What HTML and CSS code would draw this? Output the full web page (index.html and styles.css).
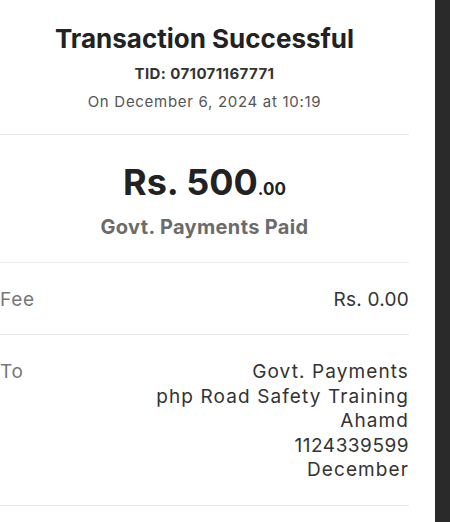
FILE: index.html
```html
<!DOCTYPE html>
<html lang="en">
<head>
<meta charset="utf-8">
<title>Transaction Successful</title>
<link rel="stylesheet" href="styles.css">
</head>
<body>
<div class="page">
  <main class="receipt">
    <header class="head">
      <h1 class="title">Transaction Successful</h1>
      <p class="tid">TID: 071071167771</p>
      <p class="date">On December 6, 2024 at 10:19</p>
    </header>
    <section class="amount-block">
      <div class="amount">Rs. 500<span class="cents">.00</span></div>
      <div class="paid">Govt. Payments Paid</div>
    </section>
    <div class="row">
      <div class="label">Fee</div>
      <div class="value">Rs. 0.00</div>
    </div>
    <div class="row">
      <div class="label">To</div>
      <div class="value value-multi">
        <div>Govt. Payments</div>
        <div>php Road Safety Training</div>
        <div>Ahamd</div>
        <div class="digits">1124339599</div>
        <div>December</div>
      </div>
    </div>
  </main>
  <aside class="sidebar"></aside>
</div>
</body>
</html>
```
FILE: styles.css
```css
html, body {
  margin: 0;
  padding: 0;
  background: #ffffff;
}
body {
  font-family: Inter, "Noto Sans", sans-serif;
  color: #333;
}
.page {
  display: flex;
  justify-content: space-between;
  min-height: 522px;
}
.receipt {
  width: 409px;
}
.sidebar {
  width: 15px;
  background: #2a2a2a;
}
.head {
  padding: 23px 0 22px;
  text-align: center;
  border-bottom: 1px solid #e8e8e8;
}
.title {
  margin: 0;
  font-size: 26px;
  line-height: 32px;
  font-weight: 700;
  color: #222;
}
.tid {
  margin: 9px 0 0;
  font-size: 15px;
  line-height: 20px;
  font-weight: 700;
  letter-spacing: 0.4px;
  color: #333;
}
.date {
  margin: 8px 0 0;
  font-size: 15px;
  line-height: 20px;
  letter-spacing: 0.7px;
  color: #555;
}
.amount-block {
  padding: 25px 0 22px;
  text-align: center;
  border-bottom: 1px solid #ececec;
}
.amount {
  font-size: 36px;
  line-height: 44px;
  font-weight: 700;
  color: #222;
}
.cents {
  font-size: 17px;
}
.paid {
  margin-top: 3px;
  font-size: 20px;
  line-height: 26px;
  font-weight: 700;
  letter-spacing: 0.35px;
  color: #6b6b6b;
}
.row {
  display: flex;
  justify-content: space-between;
  padding: 25px 0 22px;
  font-size: 19px;
  line-height: 24px;
  border-bottom: 1px solid #e8e8e8;
}
.label {
  color: #777;
  letter-spacing: 0.7px;
}
.value {
  color: #333;
  text-align: right;
  letter-spacing: 0.25px;
}
.value-multi {
  line-height: 24.5px;
  letter-spacing: 1.1px;
}
.value-multi .digits {
  letter-spacing: 0.5px;
}
```
